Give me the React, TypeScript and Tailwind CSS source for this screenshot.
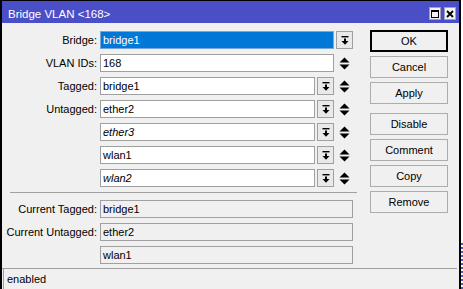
const font = "font-['Liberation_Sans',Arial,sans-serif]";

function DropButton() {
  return (
    <div className="w-[17px] h-full shrink-0 flex items-center justify-center border border-[#a0a0a0] bg-[#e9e9e9]">
      <svg width="8" height="9" viewBox="0 0 8 9">
        <rect x="0.5" y="0" width="7" height="1.4" fill="#000" />
        <rect x="3" y="2.5" width="2" height="2.5" fill="#000" />
        <polygon points="0.5,5 7.5,5 4,8.8" fill="#000" />
      </svg>
    </div>
  );
}

function UpDown() {
  return (
    <div className="w-[17px] h-full shrink-0 flex items-center justify-center">
      <svg width="11" height="13" viewBox="0 0 11 13">
        <polygon points="0.5,5.5 5.5,0.5 10.5,5.5" fill="#000" />
        <polygon points="0.5,7.5 5.5,12.5 10.5,7.5" fill="#000" />
      </svg>
    </div>
  );
}

type RowProps = {
  label?: string;
  value: string;
  italic?: boolean;
  drop?: boolean;
  updown?: boolean;
  selected?: boolean;
  readOnly?: boolean;
};

function Row({ label, value, italic, drop, updown, selected, readOnly }: RowProps) {
  const box = selected
    ? "bg-[#0078d7] text-white border-[#7aa7d9]"
    : readOnly
      ? "bg-[#f0f0f0] text-black border-[#a0a0a0]"
      : "bg-white text-black border-[#a0a0a0]";
  return (
    <div className="flex h-[18px] items-stretch">
      <div className="w-[98px] shrink-0 flex items-center justify-end pr-[3px] text-[11px] text-black whitespace-nowrap">
        {label ? `${label}:` : ""}
      </div>
      <div className="w-[253px] flex items-stretch gap-[2px]">
        <div className={`flex-1 flex items-center border px-[2px] text-[11px] ${box} ${italic ? "italic" : ""}`}>
          {value}
        </div>
        {drop && <DropButton />}
        {updown && <UpDown />}
      </div>
    </div>
  );
}

function Btn({ children, primary }: { children: string; primary?: boolean }) {
  return (
    <div
      className={`w-[78px] h-[22px] flex items-center justify-center text-[11px] text-black bg-[#f0f0f0] ${
        primary ? "border-2 border-black" : "border border-[#adadad]"
      }`}
    >
      {children}
    </div>
  );
}

export default function App() {
  return (
    <div className={`w-[463px] h-[289px] flex bg-white overflow-hidden ${font}`}>
      <div className="w-[461px] h-full flex flex-col border-l-2 border-r-2 border-t border-black bg-[#f0f0f0]">
        <div className="h-[22px] shrink-0 bg-[#4a4fc8] flex items-start justify-between">
          <div className="pl-[6px] pt-[7px] text-white text-[11.5px] leading-[13px]">Bridge VLAN &lt;168&gt;</div>
          <div className="flex gap-[3px] pt-[6px] pr-[3px]">
            <div className="w-[12px] h-[13px] bg-[#f4f4f4] border border-[#9aa0c8] flex items-center justify-center">
              <div className="w-[8px] h-[8px] border border-black border-t-2" />
            </div>
            <div className="w-[12px] h-[13px] bg-[#f4f4f4] border border-[#9aa0c8] flex items-center justify-center">
              <svg width="8" height="8" viewBox="0 0 8 8">
                <path d="M1 1 L7 7 M7 1 L1 7" stroke="#000" strokeWidth="1.8" />
              </svg>
            </div>
          </div>
        </div>

        <div className="flex-1 flex">
          <div className="w-[356px] shrink-0 flex flex-col pt-[8px]">
            <div className="flex flex-col gap-[5px]">
              <Row label="Bridge" value="bridge1" selected drop />
              <Row label="VLAN IDs" value="168" updown />
              <Row label="Tagged" value="bridge1" drop updown />
              <Row label="Untagged" value="ether2" drop updown />
              <Row value="ether3" italic drop updown />
              <Row value="wlan1" drop updown />
              <Row value="wlan2" italic drop updown />
            </div>
            <div className="h-px bg-[#a0a0a0] ml-[8px] mr-[1px] mt-[5px] mb-[7px]" />
            <div className="flex flex-col gap-[5px]">
              <Row label="Current Tagged" value="bridge1" readOnly />
              <Row label="Current Untagged" value="ether2" readOnly />
              <Row value="wlan1" readOnly />
            </div>
          </div>
          <div className="flex-1 flex flex-col pl-[12px] pt-[7px] gap-[4px]">
            <Btn primary>OK</Btn>
            <Btn>Cancel</Btn>
            <Btn>Apply</Btn>
            <div className="mt-[5px]">
              <Btn>Disable</Btn>
            </div>
            <Btn>Comment</Btn>
            <Btn>Copy</Btn>
            <Btn>Remove</Btn>
          </div>
        </div>

        <div className="h-[21px] shrink-0 border-t border-[#a0a0a0] mr-[2px] flex">
          <div className="ml-[1px] border-l border-[#a0a0a0] flex items-center pl-[3px] text-[11px] text-black">
            enabled
          </div>
        </div>
      </div>
      <div className="w-[2px] h-full flex flex-col">
        <div className="flex-1 bg-white" />
        <div className="h-[46px] bg-[repeating-linear-gradient(180deg,#4a4fc8_0_2px,#ffffff_2px_4px)]" />
      </div>
    </div>
  );
}
